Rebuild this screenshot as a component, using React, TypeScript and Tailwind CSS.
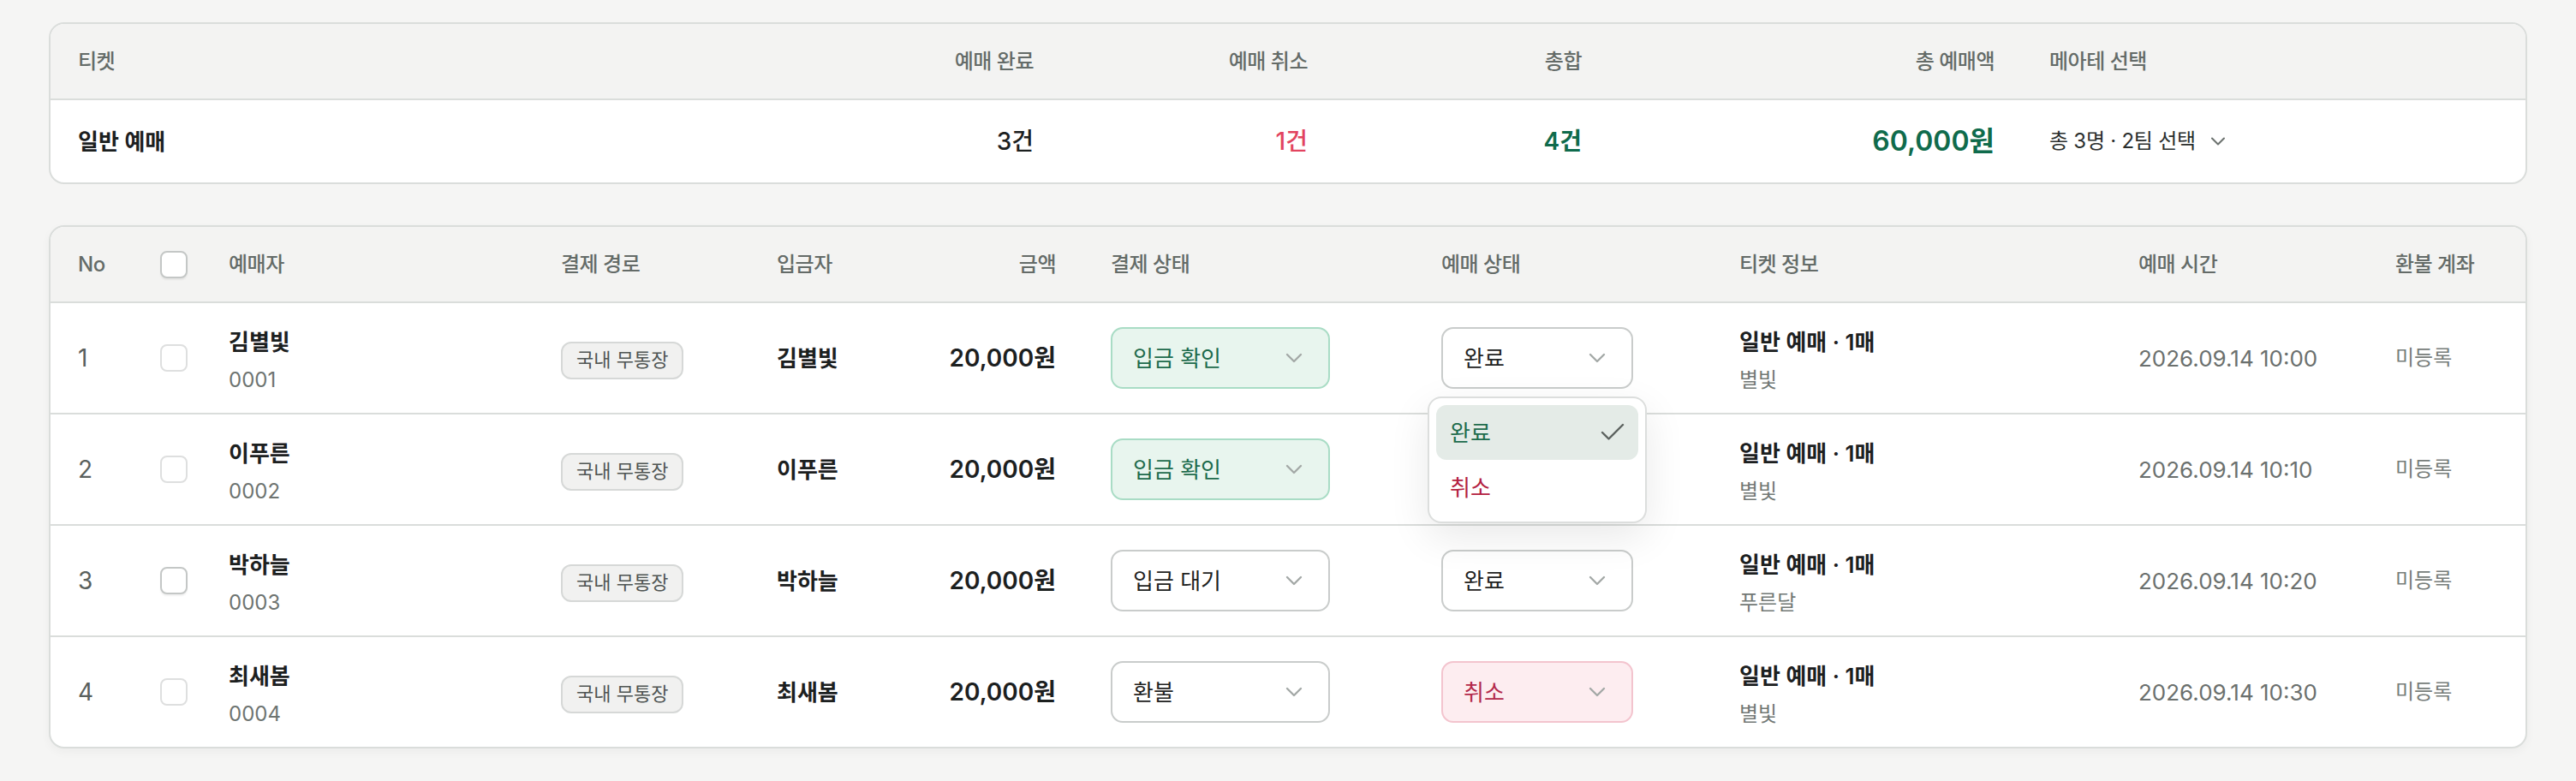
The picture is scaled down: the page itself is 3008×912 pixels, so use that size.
import React from 'react';
import { Check, ChevronDown } from 'lucide-react';

type Tone = 'green' | 'plain' | 'red';

interface Booking {
  no: number;
  name: string;
  code: string;
  payer: string;
  payment: string;
  paymentTone: Tone;
  status: string;
  statusTone: Tone;
  team: string;
  time: string;
  strongBox?: boolean;
}

const bookings: Booking[] = [
  { no: 1, name: '김별빛', code: '0001', payer: '김별빛', payment: '입금 확인', paymentTone: 'green', status: '완료', statusTone: 'plain', team: '별빛', time: '2026.09.14 10:00' },
  { no: 2, name: '이푸른', code: '0002', payer: '이푸른', payment: '입금 확인', paymentTone: 'green', status: '완료', statusTone: 'plain', team: '별빛', time: '2026.09.14 10:10' },
  { no: 3, name: '박하늘', code: '0003', payer: '박하늘', payment: '입금 대기', paymentTone: 'plain', status: '완료', statusTone: 'plain', team: '푸른달', time: '2026.09.14 10:20', strongBox: true },
  { no: 4, name: '최새봄', code: '0004', payer: '최새봄', payment: '환불', paymentTone: 'plain', status: '취소', statusTone: 'red', team: '별빛', time: '2026.09.14 10:30' },
];

const toneClass: Record<Tone, string> = {
  green: 'border-[#a9dcc5] bg-[#e8f5ee] text-[#1d6b4c]',
  plain: 'border-[#c9cccb] bg-white text-[#1f2322]',
  red: 'border-[#f3c4ce] bg-[#fdedf0] text-[#b3294b]',
};

const StatusSelect: React.FC<{ label: string; tone: Tone; wide?: boolean; hidden?: boolean }> = ({
  label,
  tone,
  wide,
  hidden,
}) => (
  <div
    className={`flex h-9 items-center justify-between rounded-[7px] border px-3 text-[13px] ${wide ? 'w-32' : 'w-28'} ${
      toneClass[tone]
    } ${hidden ? 'invisible' : ''}`}
  >
    <span>{label}</span>
    <ChevronDown size={16} strokeWidth={1.75} className="text-[#a3a8a6]" />
  </div>
);

const Checkbox: React.FC<{ strong?: boolean }> = ({ strong }) => (
  <div
    className={`h-4 w-4 rounded-[4px] border bg-white ${
      strong ? 'border-[#c4c7c6] shadow-[0_1px_1px_rgba(0,0,0,0.06)]' : 'border-[#dedfdf]'
    }`}
  />
);

// open menu for the first row's 예매 상태
const StatusMenu = () => (
  <div className="absolute left-[-8px] top-[calc(100%+4.5px)] z-10 w-32 rounded-lg border border-[#dcdedd] bg-white p-1 shadow-[0_8px_24px_rgba(0,0,0,0.09)]">
    <div className="flex h-8 items-center justify-between rounded-md bg-[#e4ebe7] pl-2 pr-1.5 text-[13px] text-[#1d6b4c]">
      <span>완료</span>
      <Check size={18} strokeWidth={1.6} className="text-[#5c625f]" />
    </div>
    <div className="flex h-8 items-center px-2 text-[13px] text-[#b3203f]">취소</div>
  </div>
);

const summaryCols = 'grid grid-cols-[1fr_160px_160px_160px_241px_294px]';
const tableCols = 'grid grid-cols-[48px_40px_194px_126px_100px_95px_193px_174px_233px_150px_1fr]';
const headText = 'text-[12px] font-medium tracking-[-0.02em] text-[#646b68]';

export default function App() {
  return (
    <div className="min-h-screen bg-[#f5f5f4]">
      <div className="[zoom:2] px-[28.5px] pt-[13px] font-['Inter','Noto_Sans_CJK_KR',sans-serif] text-[#1c201f]">
        {/* ticket summary */}
        <div className="overflow-hidden rounded-[9px] border border-[#dadddb] bg-white">
          <div className={`${summaryCols} ${headText} h-[44.5px] items-center border-b border-[#dadddb] bg-[#f3f3f2]`}>
            <div className="px-4">티켓</div>
            <div className="px-4 text-right">예매 완료</div>
            <div className="px-4 text-right">예매 취소</div>
            <div className="px-4 text-right">총합</div>
            <div className="px-4 text-right">총 예매액</div>
            <div className="px-4">메아테 선택</div>
          </div>
          <div className={`${summaryCols} h-12 items-center`}>
            <div className="px-4 text-[13px] font-semibold">일반 예매</div>
            <div className="px-4 text-right text-sm font-medium">3건</div>
            <div className="px-4 text-right text-sm font-medium text-[#e2445f]">1건</div>
            <div className="px-4 text-right text-sm font-semibold text-[#0f6b4c]">4건</div>
            <div className="px-4 text-right text-base font-semibold text-[#0f6b4c]">60,000원</div>
            <div className="flex items-center gap-1.5 px-4 text-[12px] tracking-[-0.01em] text-[#2a2e2d]">
              <span>총 3명 · 2팀 선택</span>
              <ChevronDown size={14} strokeWidth={1.75} className="text-[#6b716e]" />
            </div>
          </div>
        </div>

        {/* booking list */}
        <div className="mt-6 overflow-hidden rounded-[9px] border border-[#dadddb] bg-white shadow-[0_2px_6px_rgba(0,0,0,0.04)]">
          <div className={`${tableCols} ${headText} h-[44.5px] items-center border-b border-[#dadddb] bg-[#f3f3f2]`}>
            <div className="px-4">No</div>
            <div className="px-4">
              <Checkbox strong />
            </div>
            <div className="px-4">예매자</div>
            <div className="px-4">결제 경로</div>
            <div className="px-4">입금자</div>
            <div className="px-4 text-right">금액</div>
            <div className="px-4">결제 상태</div>
            <div className="px-4">예매 상태</div>
            <div className="px-4">티켓 정보</div>
            <div className="px-4">예매 시간</div>
            <div className="px-4">환불 계좌</div>
          </div>

          {bookings.map((b, i) => (
            <div
              key={b.no}
              className={`${tableCols} items-center ${
                i < bookings.length - 1 ? 'h-[65px] border-b border-[#dadddb]' : 'h-16'
              }`}
            >
              <div className="px-4 text-sm text-[#59605d]">{b.no}</div>
              <div className="px-4">
                <Checkbox strong={b.strongBox} />
              </div>
              <div className="flex flex-col gap-1 px-4 pt-0.5">
                <span className="text-[13px] font-semibold leading-5">{b.name}</span>
                <span className="text-xs leading-4 text-[#6e7471]">{b.code}</span>
              </div>
              <div className="px-4">
                <span className="inline-flex h-[22px] items-center rounded-md border border-[#d6d8d7] bg-[#f1f1f0] px-2 text-[11px] text-[#4f5553]">
                  국내 무통장
                </span>
              </div>
              <div className="px-4 text-[13px] font-semibold">{b.payer}</div>
              <div className="px-4 text-right text-sm font-semibold">20,000원</div>
              <div className="px-4">
                <StatusSelect label={b.payment} tone={b.paymentTone} wide />
              </div>
              <div className="px-4">
                <div className="relative w-28">
                  <StatusSelect label={b.status} tone={b.statusTone} hidden={i === 1} />
                  {i === 0 && <StatusMenu />}
                </div>
              </div>
              <div className="flex flex-col gap-1 px-4 pt-0.5">
                <span className="text-[13px] font-semibold leading-5">일반 예매 · 1매</span>
                <span className="text-xs leading-4 text-[#727875]">{b.team}</span>
              </div>
              <div className="px-4 text-[13px] text-[#6b706e]">{b.time}</div>
              <div className="px-4 text-xs text-[#777d7a]">미등록</div>
            </div>
          ))}
        </div>
      </div>
    </div>
  );
}
